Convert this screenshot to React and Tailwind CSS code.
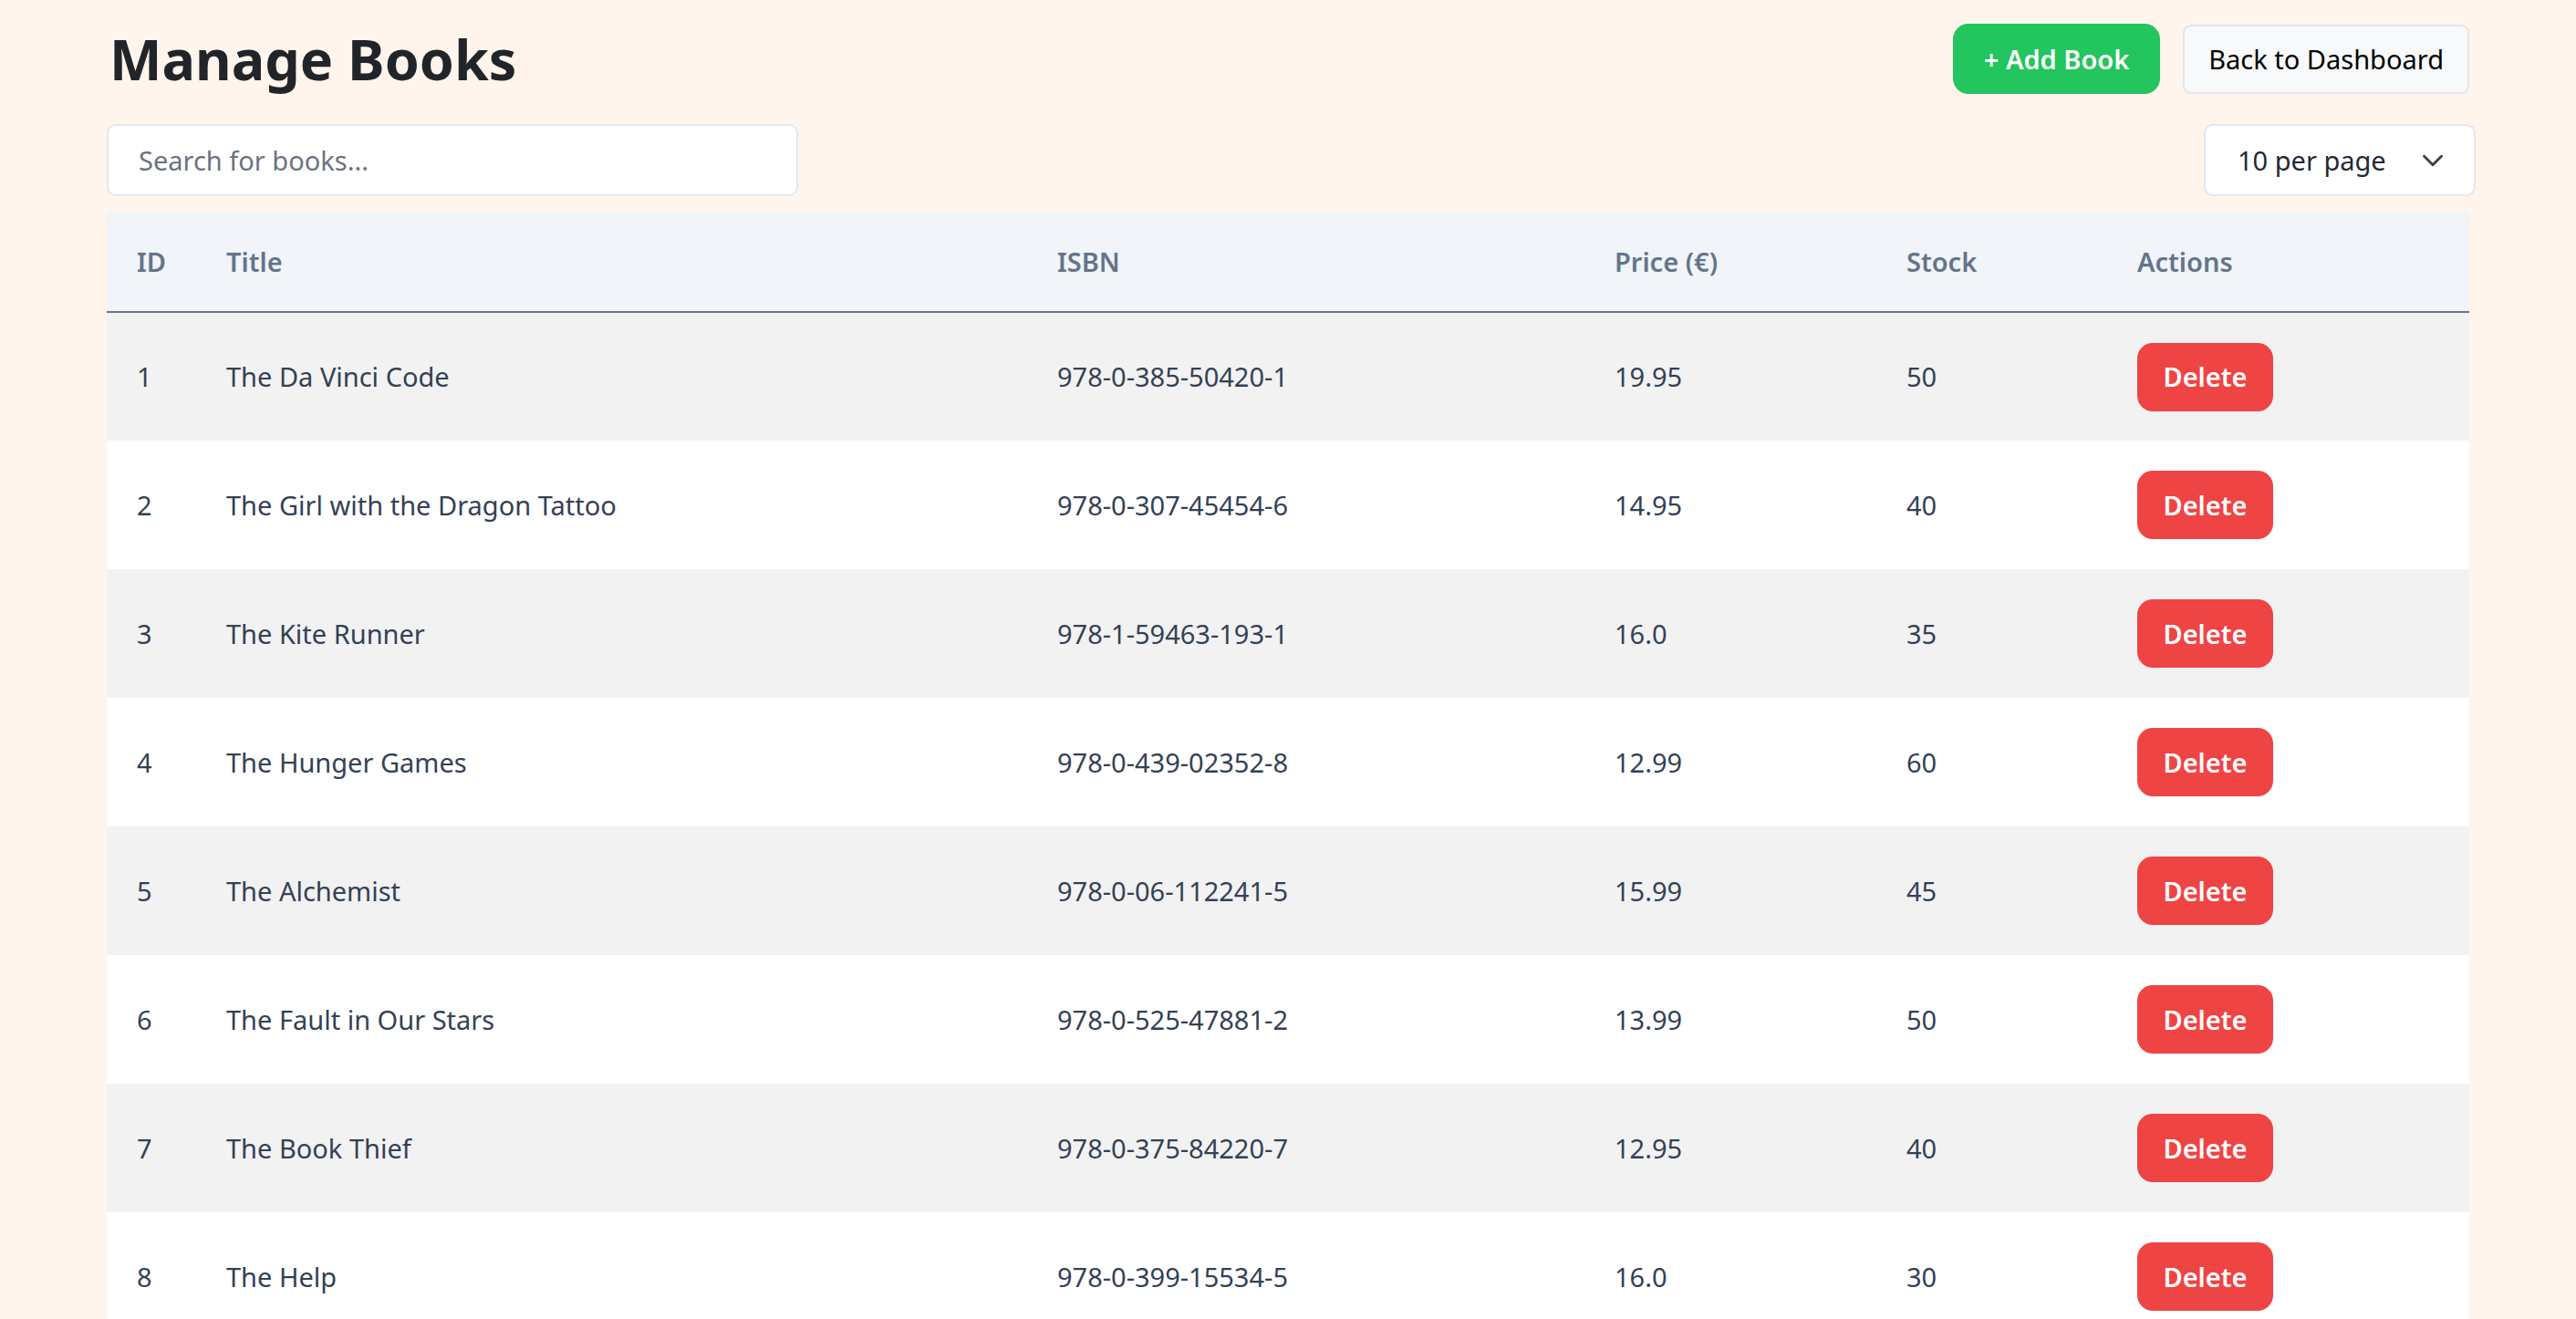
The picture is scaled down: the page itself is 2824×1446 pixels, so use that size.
import React from 'react';
import { ChevronDown } from 'lucide-react';

const books = [
  { id: 1, title: 'The Da Vinci Code', isbn: '978-0-385-50420-1', price: '19.95', stock: 50 },
  { id: 2, title: 'The Girl with the Dragon Tattoo', isbn: '978-0-307-45454-6', price: '14.95', stock: 40 },
  { id: 3, title: 'The Kite Runner', isbn: '978-1-59463-193-1', price: '16.0', stock: 35 },
  { id: 4, title: 'The Hunger Games', isbn: '978-0-439-02352-8', price: '12.99', stock: 60 },
  { id: 5, title: 'The Alchemist', isbn: '978-0-06-112241-5', price: '15.99', stock: 45 },
  { id: 6, title: 'The Fault in Our Stars', isbn: '978-0-525-47881-2', price: '13.99', stock: 50 },
  { id: 7, title: 'The Book Thief', isbn: '978-0-375-84220-7', price: '12.95', stock: 40 },
  { id: 8, title: 'The Help', isbn: '978-0-399-15534-5', price: '16.0', stock: 30 },
];

export default function App() {
  const thClass = "px-[33px] text-left font-semibold text-[#64748b]";
  const tdClass = "px-[33px] text-[#334155]";

  return (
    <div className="min-h-screen bg-[#fff5ec] px-[117px] pt-[26px] font-['Noto_Sans',sans-serif] text-[29px]">
      {/* header */}
      <div className="flex items-center justify-between">
        <h1 className="text-[61px] font-bold leading-none text-[#212529] pl-[3px]">Manage Books</h1>
        <div className="flex items-center gap-[25px]">
          <button className="h-[77px] px-[34px] rounded-[17px] bg-[#22c55e] text-white font-semibold">
            + Add Book
          </button>
          <button className="h-[76px] px-[26px] rounded-[9px] bg-[#f8f9fa] border-2 border-[#e2e5ea] text-black">
            Back to Dashboard
          </button>
        </div>
      </div>

      {/* search + page size */}
      <div className="flex items-center justify-between mt-[33px]">
        <input
          type="text"
          placeholder="Search for books..."
          className="w-[758px] h-[79px] px-[33px] bg-white border-2 border-[#e5e7eb] rounded-[10px] placeholder:text-[#6b7280] outline-none"
        />
        <div className="-mr-[7px] w-[298px] h-[79px] pl-[35px] pr-[26px] flex items-center justify-between bg-white border-2 border-[#e5e7eb] rounded-[10px] text-[#1f2937]">
          <span>10 per page</span>
          <ChevronDown size={38} strokeWidth={1.8} className="text-[#374151]" />
        </div>
      </div>

      {/* table */}
      <table className="w-full mt-[17px] border-collapse">
        <thead>
          <tr className="bg-[#f1f4f8] border-b-2 border-[#64748b] h-[110px]">
            <th className={`${thClass} w-[97px]`}>ID</th>
            <th className={`${thClass} w-[911px]`}>Title</th>
            <th className={`${thClass} w-[611px]`}>ISBN</th>
            <th className={`${thClass} w-[320px]`}>Price (€)</th>
            <th className={`${thClass} w-[253px]`}>Stock</th>
            <th className={thClass}>Actions</th>
          </tr>
        </thead>
        <tbody>
          {books.map((b, i) => (
            <tr key={b.id} className={`h-[141px] ${i % 2 === 0 ? 'bg-[#f2f2f2]' : 'bg-white'}`}>
              <td className={tdClass}>{b.id}</td>
              <td className={tdClass}>{b.title}</td>
              <td className={tdClass}>{b.isbn}</td>
              <td className={tdClass}>{b.price}</td>
              <td className={tdClass}>{b.stock}</td>
              <td className={tdClass}>
                <button className="h-[75px] w-[149px] rounded-[17px] bg-[#ef4444] text-white font-semibold">
                  Delete
                </button>
              </td>
            </tr>
          ))}
        </tbody>
      </table>
    </div>
  );
}
